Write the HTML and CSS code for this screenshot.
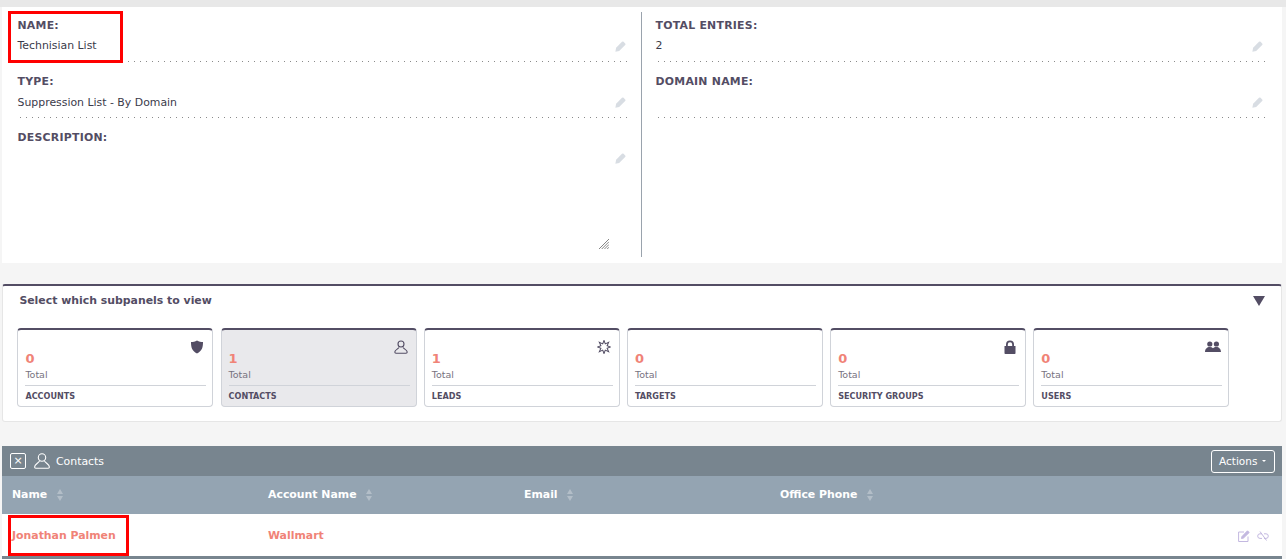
FILE: index.html
```html
<html>
    <head>
        <title>Technisian List</title>
        <link rel="stylesheet" href="styles.css">
    </head>
    <body>
        <div class="topstrip"></div>

        <section class="detail">
            <div class="detail__col">
                <div class="field">
                    <div class="field__label">NAME:</div>
                    <div class="field__value">Technisian List</div>
                    <svg class="pencil" viewBox="0 0 12 12"><path d="M.4 11.600l.8-4.200L7.600.9a1.300 1.300 0 0 1 1.800 0l1.700 1.700a1.300 1.300 0 0 1 0 1.800l-6.500 6.400z"/></svg>
                </div>
                <div class="field">
                    <div class="field__label">TYPE:</div>
                    <div class="field__value">Suppression List - By Domain</div>
                    <svg class="pencil" viewBox="0 0 12 12"><path d="M.4 11.600l.8-4.200L7.600.9a1.300 1.300 0 0 1 1.800 0l1.700 1.700a1.300 1.300 0 0 1 0 1.800l-6.500 6.400z"/></svg>
                </div>
                <div class="field field--tall">
                    <div class="field__label">DESCRIPTION:</div>
                    <svg class="pencil" viewBox="0 0 12 12"><path d="M.4 11.600l.8-4.200L7.600.9a1.300 1.300 0 0 1 1.800 0l1.700 1.700a1.300 1.300 0 0 1 0 1.800l-6.500 6.400z"/></svg>
                    <svg class="grip" viewBox="0 0 11 11" fill="none" stroke="#777" stroke-width="1">
                        <path d="M0 11L11 0M3 11l8-8M6 11l5-5M9 11l2-2"/>
                    </svg>
                </div>
            </div>
            <div class="detail__col detail__col--right">
                <div class="field">
                    <div class="field__label">TOTAL ENTRIES:</div>
                    <div class="field__value">2</div>
                    <svg class="pencil" viewBox="0 0 12 12"><path d="M.4 11.600l.8-4.200L7.600.9a1.300 1.300 0 0 1 1.800 0l1.700 1.700a1.300 1.300 0 0 1 0 1.800l-6.500 6.400z"/></svg>
                </div>
                <div class="field">
                    <div class="field__label">DOMAIN NAME:</div>
                    <div class="field__value"></div>
                    <svg class="pencil" viewBox="0 0 12 12"><path d="M.4 11.600l.8-4.200L7.600.9a1.300 1.300 0 0 1 1.800 0l1.700 1.700a1.300 1.300 0 0 1 0 1.800l-6.500 6.400z"/></svg>
                </div>
            </div>
        </section>

        <section class="chooser">
            <div class="chooser__head">
                <span>Select which subpanels to view</span>
                <span class="chooser__arrow"></span>
            </div>
            <div class="cards">
                <div class="card">
                    <svg class="card__icon" viewBox="0 0 14 14"><path d="M7 .5c2 1.200 4 1.500 6 1.500 0 5-.8 9-6 11.500C1.800 11 1 7 1 2c2 0 4-.3 6-1.500z"/></svg>
                    <div class="card__count">0</div>
                    <div class="card__total">Total</div>
                    <div class="card__name">ACCOUNTS</div>
                </div>
                <div class="card card--active">
                    <svg class="card__icon card__icon--line" viewBox="0 0 14 14"><circle cx="7" cy="4" r="3"/><path d="M5 7.500C4 9 .8 10 .8 12c0 .8.400 1.200 1.200 1.200h10c.8 0 1.200-.4 1.200-1.200 0-2-3.200-3-4.200-4.500"/></svg>
                    <div class="card__count">1</div>
                    <div class="card__total">Total</div>
                    <div class="card__name">CONTACTS</div>
                </div>
                <div class="card">
                    <svg class="card__icon card__icon--line" viewBox="-.5 -.5 15 15"><path d="M7 0L8.380 3.670 11.950 2.050 10.330 5.620 14 7 10.330 8.380 11.950 11.950 8.380 10.330 7 14 5.620 10.330 2.050 11.950 3.670 8.380 0 7 3.670 5.620 2.050 2.050 5.620 3.670z"/></svg>
                    <div class="card__count">1</div>
                    <div class="card__total">Total</div>
                    <div class="card__name">LEADS</div>
                </div>
                <div class="card">
                    <div class="card__count">0</div>
                    <div class="card__total">Total</div>
                    <div class="card__name">TARGETS</div>
                </div>
                <div class="card">
                    <svg class="card__icon" viewBox="0 0 14 14"><path d="M1.500 6H3V4.500a4 4 0 0 1 8 0V6h1.500v7.200q0 .8-.8.8H2.300q-.8 0-.8-.8zM4.800 6h4.400V4.500a2.200 2.200 0 0 0-4.400 0z" fill-rule="evenodd"/></svg>
                    <div class="card__count">0</div>
                    <div class="card__total">Total</div>
                    <div class="card__name">SECURITY GROUPS</div>
                </div>
                <div class="card">
                    <svg class="card__icon card__icon--wide" viewBox="0 0 16 12"><circle cx="4.800" cy="3" r="2.600"/><circle cx="11.400" cy="3" r="2.600"/><path d="M0 11c0-3 2-5 4.800-5 1.300 0 2.400.4 3.200 1.200C8.800 6.400 10 6 11.200 6 14 6 16 8 16 11z"/></svg>
                    <div class="card__count">0</div>
                    <div class="card__total">Total</div>
                    <div class="card__name">USERS</div>
                </div>
            </div>
        </section>

        <section class="subpanel">
            <div class="subpanel__bar">
                <span class="closebox">×</span>
                <svg class="subpanel__icon" viewBox="0 0 16 16" fill="none" stroke="#fff" stroke-width="1.100"><circle cx="8" cy="4.500" r="3.700"/><path d="M5.500 8C4.500 10 .6 11.500.6 14c0 .8.400 1.200 1.200 1.200h12.400c.8 0 1.200-.4 1.200-1.200 0-2.500-3.900-4-4.900-6"/></svg>
                <span class="subpanel__title">Contacts</span>
                <span class="actions">Actions <i class="actions__caret"></i></span>
            </div>
            <div class="grid grid--head">
                <div>Name <span class="sort"></span></div>
                <div>Account Name <span class="sort"></span></div>
                <div>Email <span class="sort"></span></div>
                <div>Office Phone <span class="sort"></span></div>
            </div>
            <div class="grid grid--row">
                <div><a class="link">Jonathan Palmen</a></div>
                <div><a class="link">Wallmart</a></div>
                <div></div>
                <div></div>
                <div class="rowicons">
                    <svg viewBox="0 0 12 12" fill="none" stroke="#c3b8e0" stroke-width="1"><path d="M10 6.500v5H.6V2h5.400"/><path d="M3.500 8.500l.5-2L9.500.8l1.700 1.700L5.500 8z" fill="#c3b8e0"/></svg>
                    <svg viewBox="0 0 12 12" fill="none" stroke="#c3b8e0" stroke-width="1"><path d="M5 3.800H3a2.300 2.300 0 0 0 0 4.600h2M7 3.800h2a2.300 2.300 0 0 1 0 4.600H7M3 1.500l6.500 9"/></svg>
                </div>
            </div>
            <div class="subpanel__foot"></div>
        </section>

        <!-- red annotation boxes drawn on top of the screenshot -->
        <div class="mark mark--name"></div>
        <div class="mark mark--contact"></div>
    </body>
</html>
```

FILE: styles.css
```css
* {
    box-sizing: border-box;
    margin: 0;
    padding: 0;
}
:root {
    --ink: #534d64;
    --salmon: #f08377;
    --line: #d0d3d9;
}
html,
body {
    height: 559px;
    overflow: hidden;
}
body {
    background-color: #f5f5f5;
    color: var(--ink);
    font: 10.900px/14px "DejaVu Sans", sans-serif;
    position: relative;
}
.topstrip {
    height: 7px;
    background-color: #e8e8e8;
}

/* Detail panel */
.detail {
    display: grid;
    grid-template-columns: 639px 1fr;
    height: 256px;
    margin: 0 4px 0 2px;
    padding: 5px 0 6px;
    background-color: #fff;
}
.detail__col--right {
    border-left: 1px solid #9aa3ad;
}
.field {
    position: relative;
    height: 56.400px;
    padding: 7px 0 0 15.500px;
}
.detail__col--right .field {
    padding-left: 13.500px;
}
.field::after {
    content: "";
    position: absolute;
    left: 18px;
    right: 11px;
    top: 49px;
    height: 1px;
    background-image: linear-gradient(to right, #8a8a8a 1px, transparent 1px);
    background-size: 6px 1px;
}
.detail__col--right .field::after {
    left: 16px;
    right: 16px;
}
.field--tall {
    height: 130px;
    margin-top: -0.800px;
}
.field--tall::after {
    display: none;
}
.field__label {
    font-weight: bold;
    letter-spacing: 0.25px;
}
.field__value {
    margin-top: 6.300px;
    height: 14px;
    color: #3a3a4a;
}
.pencil {
    position: absolute;
    right: 15px;
    top: 29px;
    width: 11px;
    height: 11px;
    fill: #d8dde3;
}
.detail__col--right .pencil {
    right: 19px;
}
.grip {
    position: absolute;
    right: 32px;
    bottom: 5px;
    width: 10px;
    height: 10px;
}

/* Subpanel chooser */
.chooser {
    height: 138px;
    margin: 21px 4px 0 2px;
    padding: 8px 15px 0 14.400px;
    background-color: #fff;
    border: 1px solid #e6e6e6;
    border-top: 2px solid var(--ink);
    border-radius: 3px;
}
.chooser__head {
    display: flex;
    justify-content: space-between;
    align-items: center;
    padding: 0 2px;
    font-weight: bold;
}
.chooser__arrow {
    width: 0;
    height: 0;
    margin-right: -1px;
    border-left: 6px solid transparent;
    border-right: 6px solid transparent;
    border-top: 10px solid var(--ink);
}
.cards {
    display: flex;
    gap: 7.200px;
    margin-top: 20px;
}
.card {
    position: relative;
    width: 196px;
    height: 79px;
    padding: 21px 6px 0 7px;
    background-color: #fff;
    border: 1px solid var(--line);
    border-top: 2px solid var(--ink);
    border-radius: 4px;
}
.card--active {
    background-color: #e9e9ec;
}
.card__icon {
    position: absolute;
    top: 10px;
    right: 8px;
    width: 14px;
    height: 14px;
    fill: var(--ink);
}
.card__icon--line {
    fill: none;
    stroke: var(--ink);
    stroke-width: 1.100;
}
.card__icon--wide {
    width: 16px;
    height: 12px;
    top: 11px;
    right: 7px;
}
.card__count {
    color: var(--salmon);
    font-size: 13px;
    font-weight: bold;
    line-height: 16px;
}
.card__total {
    margin-top: 1px;
    padding-bottom: 4px;
    border-bottom: 1px solid var(--line);
    color: #77737f;
    font-size: 9.500px;
    line-height: 13px;
}
.card__name {
    margin-top: 4px;
    font-size: 9px;
    font-weight: bold;
    font-stretch: condensed;
    line-height: 13px;
}

/* Contacts subpanel */
.subpanel {
    margin: 24px 4px 0 2px;
}
.subpanel__bar {
    display: flex;
    align-items: center;
    height: 30px;
    padding: 0 7px 0 8px;
    background-color: #78858f;
    color: #fff;
}
.closebox {
    display: flex;
    align-items: center;
    justify-content: center;
    width: 16px;
    height: 16px;
    border: 1px solid #fff;
    border-radius: 2px;
    font-size: 11px;
}
.subpanel__icon {
    width: 16px;
    height: 16px;
    margin-left: 8px;
}
.subpanel__title {
    margin-left: 6px;
    padding-top: 1px;
}
.actions {
    display: flex;
    align-items: center;
    gap: 5px;
    width: 64px;
    height: 23px;
    margin-left: auto;
    padding: 0 7px 1px;
    border: 1px solid #fff;
    border-radius: 3px;
    font-size: 10.500px;
}
.actions__caret {
    border-left: 2px solid transparent;
    border-right: 2px solid transparent;
    border-top: 2px solid #fff;
}
.grid {
    display: grid;
    grid-template-columns: 256px 256px 256px 256px 1fr;
    align-items: center;
    padding-left: 10px;
}
.grid--head {
    height: 38px;
    background-color: #94a4b2;
    color: #fff;
    font-weight: bold;
}
.grid--row {
    height: 42px;
    padding-top: 1px;
    background-color: #fff;
}
.sort {
    display: inline-block;
    width: 0;
    margin-left: 6px;
    vertical-align: -3px;
    border-left: 3.500px solid transparent;
    border-right: 3.500px solid transparent;
    border-top: 5px solid #b3bec8;
    position: relative;
}
.sort::before {
    content: "";
    position: absolute;
    left: -3.500px;
    top: -12px;
    border-left: 3.500px solid transparent;
    border-right: 3.500px solid transparent;
    border-bottom: 5px solid #b3bec8;
}
.link {
    color: var(--salmon);
    font-weight: bold;
}
.rowicons {
    display: flex;
    justify-content: flex-end;
    gap: 7px;
    padding-right: 13px;
}
.rowicons svg {
    width: 12px;
    height: 12px;
}
.subpanel__foot {
    height: 3px;
    background-color: #78858f;
}

/* Annotation */
.mark {
    position: absolute;
    border: 3px solid #ff0000;
}
.mark--name {
    left: 8px;
    top: 11px;
    width: 115px;
    height: 52px;
}
.mark--contact {
    left: 8px;
    top: 515px;
    width: 121px;
    height: 41px;
}
```
